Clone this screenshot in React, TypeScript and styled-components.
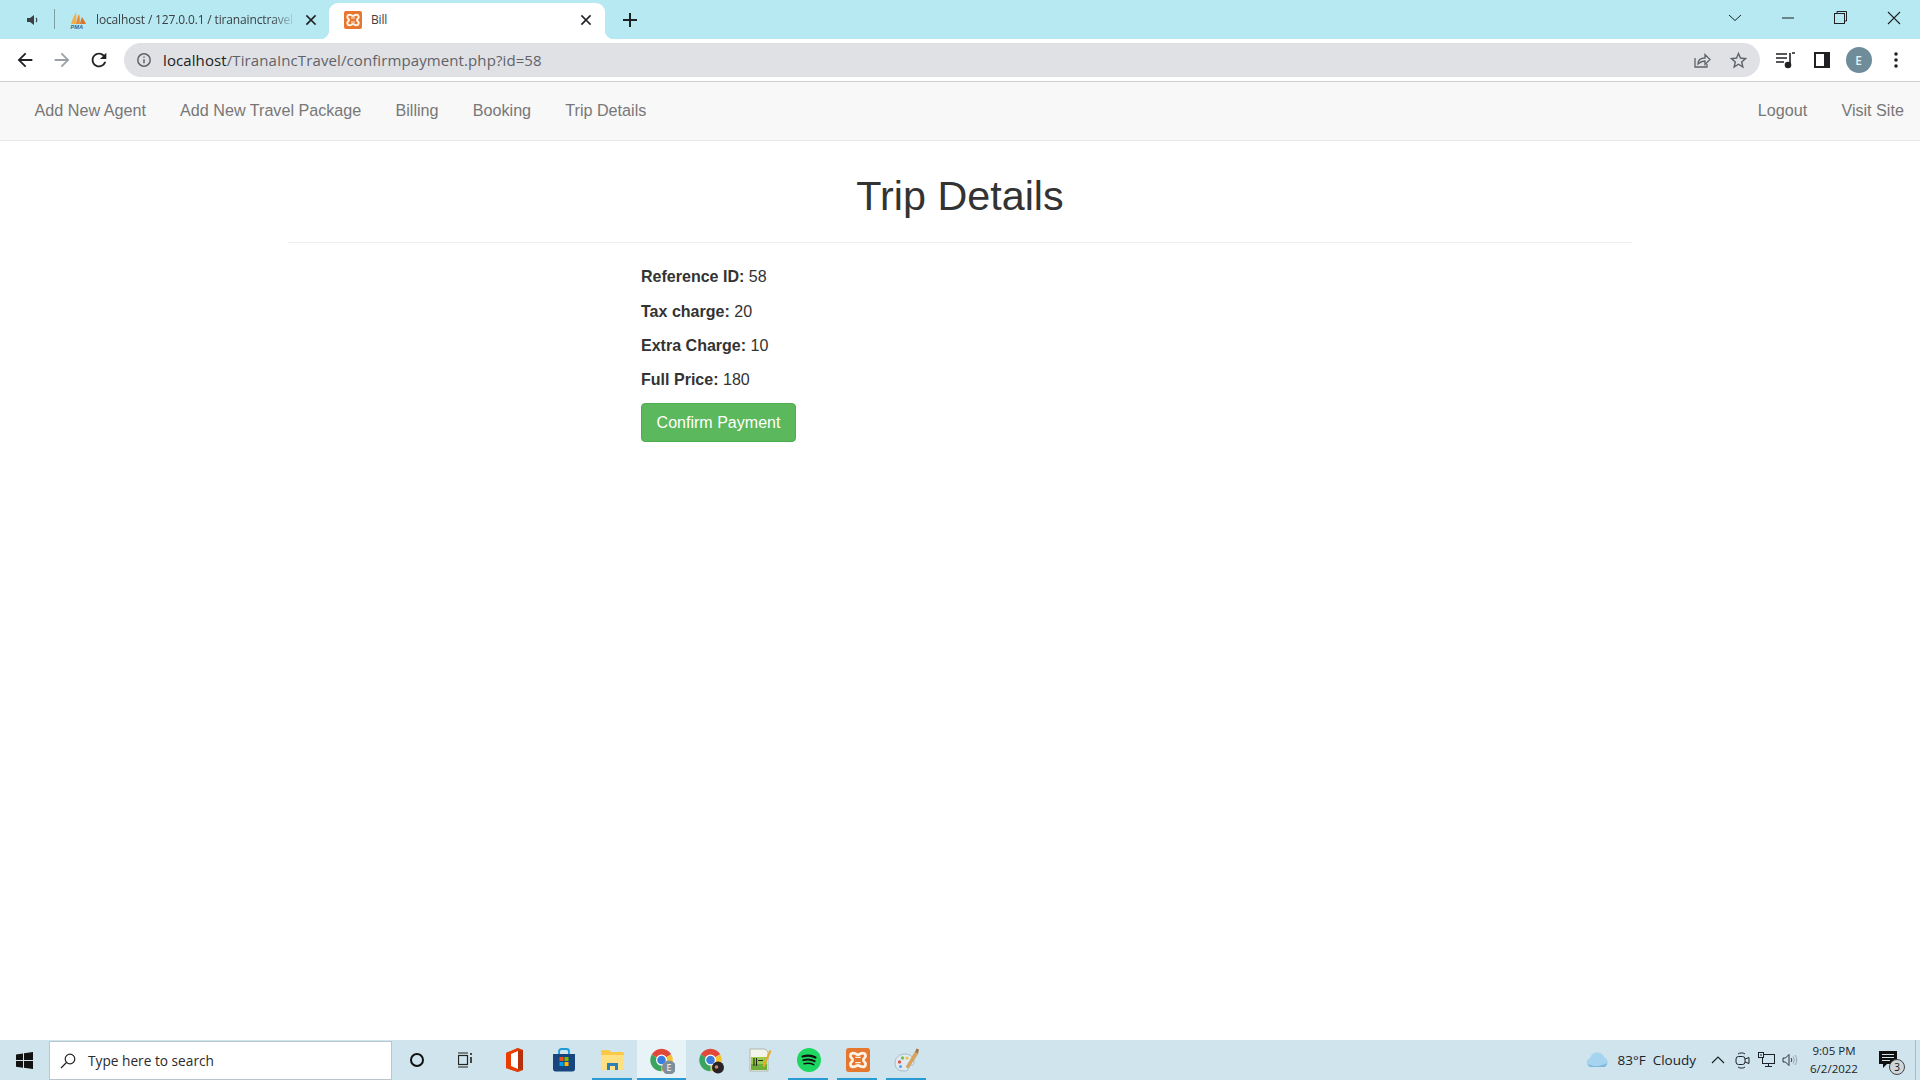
import React from "react";
import styled, { createGlobalStyle } from "styled-components";

const Global = createGlobalStyle`
  html, body { margin: 0; padding: 0; background: #fff; }
  * { box-sizing: border-box; }
  body { font-family: "Liberation Sans", Arial, sans-serif; color: #333; }
`;

const Page = styled.div`
  width: 1920px; height: 1080px; display: flex; flex-direction: column; overflow: hidden; background: #fff;
`;

/* ---------- tab strip ---------- */
const TabStrip = styled.div`
  height: 39px; flex: none; display: flex; align-items: flex-end; background: #b6e9f1;
  font-family: "Open Sans", sans-serif; font-size: 12px; color: #3c4043;
`;
const MuteSlot = styled.div`
  width: 55px; height: 39px; display: flex; align-items: center; justify-content: flex-end; padding-right: 15px;
  position: relative;
  &::after { content: ""; position: absolute; right: 0; top: 9px; width: 1px; height: 20px; background: #7f9ea3; }
`;
const Tab = styled.div<{ $active?: boolean }>`
  position: relative; height: ${p => (p.$active ? "36px" : "39px")}; flex: none;
  width: ${p => (p.$active ? "276px" : "274px")};
  display: flex; align-items: center; gap: 9px;
  padding: ${p => (p.$active ? "0 13px 3px 15px" : "0 12px 0 14px")};
  background: ${p => (p.$active ? "#fff" : "transparent")};
  border-radius: ${p => (p.$active ? "9px 9px 0 0" : "0")};
  ${p => p.$active && `
    &::before, &::after { content: ""; position: absolute; bottom: 0; width: 9px; height: 9px; }
    &::before { left: -9px; background: radial-gradient(circle at 0 0, transparent 9px, #fff 9.5px); }
    &::after { right: -9px; background: radial-gradient(circle at 100% 0, transparent 9px, #fff 9.5px); }
  `}
`;
const TabTitle = styled.span<{ $fade?: boolean }>`
  flex: 1; min-width: 0; white-space: nowrap; overflow: hidden; letter-spacing: -0.15px;
  ${p => p.$fade && `
    -webkit-mask-image: linear-gradient(to right, #000 88%, transparent 100%);
    mask-image: linear-gradient(to right, #000 88%, transparent 100%);
  `}
`;
const NewTab = styled.div`
  width: 24px; height: 39px; margin-left: 13px; display: flex; align-items: center; justify-content: center;
`;
const WindowControls = styled.div`
  margin-left: auto; display: flex; height: 39px; padding-bottom: 4px;
`;
const WinButton = styled.div`
  width: 53px; display: flex; align-items: center; justify-content: center;
`;

/* ---------- toolbar ---------- */
const Toolbar = styled.div`
  height: 43px; flex: none; display: flex; align-items: center; padding: 0 6px; background: #fff;
  border-bottom: 1px solid #cfcfcf;
`;
const ToolButton = styled.div`
  width: 37px; height: 34px; flex: none; display: flex; align-items: center; justify-content: center;
`;
const Omnibox = styled.div`
  flex: none; width: 1636px; height: 34px; margin: 0 6px 0 7px; border-radius: 17px; background: #dfe1e5;
  display: flex; align-items: center; padding: 0 3px 0 12px;
`;
const Url = styled.div`
  flex: 1; margin-left: 11px; font-family: "Open Sans", sans-serif; font-size: 15px; color: #5f6368; letter-spacing: 0.1px;
  b { font-weight: 400; color: #202124; }
`;
const Avatar = styled.div`
  width: 26px; height: 26px; border-radius: 50%; background: #6e8c99; color: #e9eff2;
  font: 600 12px "Open Sans", sans-serif; display: flex; align-items: center; justify-content: center;
`;

/* ---------- bootstrap page ---------- */
const NavBar = styled.nav`
  height: 59px; flex: none; display: flex; align-items: center; padding: 0 0 2px 17.5px; background: #f8f8f8;
  border-bottom: 1px solid #e7e7e7;
`;
const NavLink = styled.a`
  padding: 0 17.1px; font-size: 16.15px; color: #777; white-space: nowrap;
`;
const NavRight = styled.div`
  margin-left: auto; margin-right: -1px; display: flex;
`;
const Main = styled.main`
  flex: 1; min-height: 0; width: 1344px; margin: 0 auto; display: flex; flex-direction: column;
`;
const Title = styled.h1`
  margin: 0; height: 102px; padding-top: 32px; border-bottom: 1px solid #eee; text-align: center;
  font-size: 41.3px; font-weight: 400; line-height: 47px; color: #333;
`;
const Details = styled.div`
  padding: 16.4px 0 0 353px; display: flex; flex-direction: column; align-items: flex-start;
`;
const Line = styled.p`
  margin: 0; height: 34.3px; line-height: 34.3px; font-size: 16.05px; color: #333;
  b { font-weight: 700; }
`;
const ConfirmButton = styled.button`
  margin-top: 6.6px; width: 155px; height: 39px; padding: 0; background: #5cb85c; border: 1px solid #4cae4c;
  border-radius: 4px; color: #fff; font: 400 16.05px "Liberation Sans", Arial, sans-serif;
`;

/* ---------- taskbar ---------- */
const Taskbar = styled.footer`
  height: 40px; flex: none; display: flex; background: #cfe4ed; font-family: "Open Sans", sans-serif; color: #1b2328;
`;
const StartButton = styled.div`
  width: 49px; display: flex; align-items: center; justify-content: center;
`;
const SearchBox = styled.div`
  width: 343px; margin-top: 1px; background: #fff; border: 1px solid #b9c6cc; display: flex; align-items: center; gap: 12px; padding-left: 10px;
  font-size: 13.7px; color: #2b2b2b;
`;
const Slot = styled.div<{ $running?: boolean; $active?: boolean }>`
  position: relative; width: 49px; flex: none; display: flex; align-items: center; justify-content: center;
  background: ${p => (p.$active ? "#e8f3f8" : "transparent")};
  ${p => p.$running && `
    &::after { content: ""; position: absolute; bottom: 0; height: 2px; background: #2a9bd3;
      left: ${p.$active ? "0" : "4px"}; right: ${p.$active ? "0" : "5px"}; }
  `}
`;
const Tray = styled.div`
  margin-left: auto; display: flex; align-items: center; padding-right: 4px;
`;
const Weather = styled.div`
  display: flex; align-items: center; font-size: 13.5px; gap: 8px; margin-right: 12px;
`;
const TrayIcons = styled.div`
  display: flex; align-items: center; gap: 4px;
`;
const TrayIcon = styled.div`
  width: 20px; display: flex; justify-content: center;
`;
const Clock = styled.div`
  width: 66px; margin-left: 1px; text-align: center; font-size: 11.5px; line-height: 18px;
`;
const Notify = styled.div`
  position: relative; width: 34px; margin-left: 4px; display: flex; justify-content: center;
`;
const Badge = styled.span`
  position: absolute; right: 0; bottom: -6px; width: 16px; height: 16px; border-radius: 50%; background: #cfd6da;
  border: 1px solid #444; font-size: 10px; line-height: 14px; text-align: center; color: #111;
`;
const EdgeLine = styled.div`
  width: 1px; background: #a9bcc5; margin-left: 10px; height: 40px;
`;

/* ---------- drawings ---------- */
const Mat = ({ d, size = 20, fill = "#3c4043" }: { d: string; size?: number; fill?: string }) => (
  <svg width={size} height={size} viewBox="0 0 24 24" fill={fill}><path d={d} /></svg>
);
const BACK = "M20 11H7.83l5.59-5.59L12 4l-8 8 8 8 1.41-1.41L7.83 13H20v-2z";
const FWD = "M4 11h12.17l-5.59-5.59L12 4l8 8-8 8-1.41-1.41L16.17 13H4v-2z";
const RELOAD = "M17.65 6.35C16.2 4.9 14.21 4 12 4c-4.42 0-7.99 3.58-7.99 8s3.57 8 7.99 8c3.73 0 6.84-2.55 7.73-6h-2.08c-.82 2.33-3.04 4-5.65 4-3.31 0-6-2.69-6-6s2.69-6 6-6c1.66 0 3.14.69 4.22 1.78L13 11h7V4l-2.35 2.35z";
const STAR = "M22 9.24l-7.19-.62L12 2 9.19 8.63 2 9.24l5.46 4.73L5.82 21 12 17.27 18.18 21l-1.63-7.03L22 9.24zM12 15.4l-3.76 2.27 1-4.28-3.32-2.88 4.38-.38L12 6.1l1.71 4.04 4.38.38-3.32 2.88 1 4.28L12 15.4z";

const Close = ({ w = 1.7 }: { w?: number }) => (
  <svg width="12" height="12" viewBox="0 0 12 12" stroke="#202124" strokeWidth={w} strokeLinecap="square" style={{ flex: "none" }}><path d="M2 2l8 8M10 2l-8 8" /></svg>
);
const Mute = () => (
  <svg width="14" height="14" viewBox="0 0 14 14"><path d="M1 5h3l4-3v10L4 9H1z" fill="#3c4043" /><path d="M10 5c1 1 1 3 0 4" stroke="#3c4043" fill="none" strokeWidth="1.2" /></svg>
);
const PmaLogo = () => (
  <svg width="18" height="20" viewBox="0 0 18 20" style={{ flex: "none" }}>
    <path d="M2 14C3 10 5 6 7 2c.5 4 .5 8 0 12z" fill="#f2b04a" />
    <path d="M7 14c.5-3 1.500-7 3-10 1 3 .8 7 .8 10z" fill="#ec8a2e" />
    <path d="M11 14c.3-2 1-5 2-7 1.500 2 3 5 4 7z" fill="#d9762c" />
    <text x="1.500" y="19" fontSize="5.600" fontWeight="700" fontStyle="italic" fill="#3f5f92" fontFamily="Liberation Sans">PMA</text>
  </svg>
);
const Xampp = ({ size = 18 }: { size?: number }) => (
  <svg width={size} height={size} viewBox="0 0 18 18" style={{ flex: "none" }}>
    <rect width="18" height="18" rx="2" fill="#e5772f" />
    <path d="M5.500 3.800C7 3.800 8 5 9 5s2-1.200 3.500-1.200c2.300 0 2.900 2.600 1.300 3.800-1 .7-1 2.100 0 2.800 1.600 1.200 1 3.800-1.300 3.800C11 14.200 10 13 9 13s-2 1.200-3.500 1.200c-2.300 0-2.900-2.600-1.300-3.800 1-.7 1-2.100 0-2.800C2.600 6.400 3.200 3.800 5.500 3.800z" fill="none" stroke="#fdf2e6" strokeWidth="2" />
    <path d="M7 7h4M7 11h4" stroke="#fdf2e6" strokeWidth="1" />
  </svg>
);
const Info = () => (
  <svg width="16" height="16" viewBox="0 0 16 16" fill="none" stroke="#5f6368" strokeWidth="1.500">
    <circle cx="8" cy="8" r="6.200" /><path d="M8 7.200v4M8 4.500v1.300" />
  </svg>
);
const Share = () => (
  <svg width="20" height="20" viewBox="0 0 20 20" fill="none" stroke="#5f6368" strokeWidth="1.300">
    <path d="M3 8v9h12v-3" /><path d="M6 14c0-4 3-6 7-6V4.500l5 5-5 5V11c-3 0-5 1-7 3z" />
  </svg>
);
const MediaIcon = () => (
  <svg width="20" height="18" viewBox="0 0 20 18" fill="none" stroke="#202124" strokeWidth="1.600">
    <path d="M1 3h11M1 7h11M1 11h8" /><path d="M17 2h3M15 2v12" /><circle cx="13" cy="14" r="2.500" fill="#202124" />
  </svg>
);
const SidePanel = () => (
  <svg width="18" height="18" viewBox="0 0 18 18"><rect x="1" y="1" width="16" height="16" fill="#202124" /><rect x="3" y="3" width="8" height="12" fill="#fff" /></svg>
);
const Kebab = () => (
  <svg width="6" height="18" viewBox="0 0 6 18" fill="#202124"><circle cx="3" cy="3" r="1.800" /><circle cx="3" cy="9" r="1.800" /><circle cx="3" cy="15" r="1.800" /></svg>
);
const ChevronDown = () => (
  <svg width="14" height="8" viewBox="0 0 14 8" fill="none" stroke="#202124"><path d="M1 1l6 5.500L13 1" /></svg>
);
const Minimize = () => (
  <svg width="12" height="2" viewBox="0 0 12 2" stroke="#202124"><path d="M0 1h12" /></svg>
);
const Restore = () => (
  <svg width="13" height="13" viewBox="0 0 13 13" fill="none" stroke="#202124"><rect x=".5" y="2.500" width="10" height="10" /><path d="M3 2.500V.5h9.500V10h-2" /></svg>
);
const WinClose = () => (
  <svg width="14" height="14" viewBox="0 0 14 14" stroke="#202124" strokeWidth="1.100"><path d="M1 1l12 12M13 1L1 13" /></svg>
);
const WinLogo = () => (
  <svg width="17" height="17" viewBox="0 0 17 17" fill="#111"><path d="M0 2.400l7-1v6.700H0zM8 1.200l9-1.200v8H8zM0 9h7v6.700l-7-1zM8 9h9v8l-9-1.200z" /></svg>
);
const SearchGlass = () => (
  <svg width="16" height="16" viewBox="0 0 16 16" fill="none" stroke="#222" strokeWidth="1.200"><circle cx="10" cy="6" r="4.800" /><path d="M6.500 9.500L1 15" /></svg>
);
const Cortana = () => (
  <svg width="16" height="16" viewBox="0 0 16 16" fill="none" stroke="#111" strokeWidth="2"><circle cx="8" cy="8" r="6" /></svg>
);
const TaskView = () => (
  <svg width="16" height="16" viewBox="1 0 16 16" fill="none" stroke="#222" strokeWidth="1.200"><path d="M1 1h10M1 15h10" /><rect x="1.500" y="3.500" width="9" height="9" /><path d="M14 1v2M14 5v6" strokeWidth="1.600" /></svg>
);
const Office = () => (
  <svg width="20" height="24" viewBox="0 0 20 24">
    <path d="M1 5L13 0l5 2v20l-5 2-12-4z" fill="#d83b01" />
    <path d="M1 5l12-5v3L6 6v12l7 3v3L1 20z" fill="#eb3c00" />
    <path d="M6 6l7-3v18l-7-3z" fill="#fff" />
    <path d="M13 3l5-1v20l-5-1z" fill="#b7320c" />
  </svg>
);
const Store = () => (
  <svg width="24" height="24" viewBox="0 0 24 24">
    <path d="M7 6V3.500C7 2 8 1 9.500 1h5C16 1 17 2 17 3.500V6" fill="none" stroke="#1b9bd7" strokeWidth="1.800" />
    <path d="M1 6h22v15c0 1.500-1 2.500-2.500 2.500h-17C2 23.500 1 22.500 1 21z" fill="#17467e" />
    <rect x="7.500" y="9" width="4" height="4" fill="#f25022" /><rect x="12.500" y="9" width="4" height="4" fill="#7fba00" />
    <rect x="7.500" y="14" width="4" height="4" fill="#00a4ef" /><rect x="12.500" y="14" width="4" height="4" fill="#ffb900" />
  </svg>
);
const Folder = () => (
  <svg width="23" height="20" viewBox="0 0 23 20">
    <path d="M0 2c0-1 .5-2 2-2h6l2 2h11c1.500 0 2 1 2 2v14c0 1-.5 2-2 2H2c-1.500 0-2-1-2-2z" fill="#f9c947" />
    <path d="M0 5h23v13c0 1-.5 2-2 2H2c-1.500 0-2-1-2-2z" fill="#ffe183" />
    <path d="M6 20v-7h11v7h-3v-4H9v4z" fill="#2d7fb8" />
  </svg>
);
const Arc = ({ color, start }: { color: string; start: number }) => (
  <circle cx="12" cy="12" r="8" fill="none" stroke={color} strokeWidth="6.500" pathLength={3} strokeDasharray="1 2" transform={`rotate(${start} 12 12)`} />
);
const Chrome = ({ children }: { children?: React.ReactNode }) => (
  <svg width="27" height="27" viewBox="-1.500 -1 27 27">
    <Arc color="#e2483a" start={210} />
    <Arc color="#f6c230" start={330} />
    <Arc color="#3ba55d" start={90} />
    <circle cx="12" cy="12" r="5.500" fill="#fff" />
    <circle cx="12" cy="12" r="4.300" fill="#3b7ddd" />
    {children}
  </svg>
);
const Notepad = () => (
  <svg width="24" height="24" viewBox="0 0 24 24">
    <path d="M2 1h15l3 3v19H2z" fill="#f3f5ea" stroke="#9ba28f" strokeWidth=".7" />
    <path d="M3 9h16v13H3z" fill="#9acb4a" />
    <path d="M3 16h16v6H3z" fill="#6faf38" />
    <path d="M6 10v8M8.500 10v8M10 12.500h5" stroke="#1d2b18" strokeWidth="1.100" />
    <path d="M14.500 18L21.500 2l2 1-7 16z" fill="#e7ad2d" />
  </svg>
);
const Spotify = () => (
  <svg width="24" height="24" viewBox="0 0 24 24">
    <circle cx="12" cy="12" r="12" fill="#1ed760" />
    <g fill="none" stroke="#111" strokeLinecap="round">
      <path d="M5.500 8.500c4.500-1.300 9.500-1 13 1" strokeWidth="2.200" />
      <path d="M6.300 12.200c4-1.100 8-.8 11.300 1" strokeWidth="1.900" />
      <path d="M7 15.700c3.400-.8 6.800-.6 9.700.9" strokeWidth="1.500" />
    </g>
  </svg>
);
const Palette = () => (
  <svg width="26" height="24" viewBox="0 0 26 24">
    <path d="M1 15C1 9 6 6 11 6s9 3 9 8-3 2-5 4 1 5-5 5-9-3-9-8z" fill="#dfeaf2" stroke="#9cb0bc" strokeWidth=".8" />
    <circle cx="5.500" cy="14" r="1.700" fill="#e2574c" /><circle cx="8.500" cy="10" r="1.700" fill="#7bbf4a" />
    <circle cx="6.500" cy="18.500" r="1.500" fill="#5aa2dc" /><circle cx="13" cy="10" r="1.600" fill="#f1c040" />
    <path d="M12 19L21 4l3 1.500L14.500 20z" fill="#e0a35a" stroke="#b78333" strokeWidth=".4" />
    <path d="M21 4l1.500-3.500 2.500 1L24 5.500z" fill="#a3774a" />
  </svg>
);
const Cloud = () => (
  <svg width="23" height="16" viewBox="0 0 23 16">
    <path d="M5 15a4.500 4.500 0 0 1-1-8.800C5 2.500 8 .5 11.500.5c3.500 0 6 2 7 5A5 5 0 0 1 18 15z" fill="#a5d4ef" />
    <path d="M2 12c5 3 12 3 19-1-1 3-2 4-3 4H5c-1.500 0-2.500-1-3-3z" fill="#79b8de" />
  </svg>
);
const TrayChevron = () => (
  <svg width="14" height="8" viewBox="0 0 14 8" fill="none" stroke="#1b2328" strokeWidth="1.200"><path d="M1 7l6-6 6 6" /></svg>
);
const MeetIcon = () => (
  <svg width="15" height="17" viewBox="0 0 15 17" fill="none" stroke="#1b2328"><path d="M3 2c2-1.500 5-1.500 7 0M3 15c2 1.500 5 1.500 7 0" /><rect x="1" y="4.500" width="9" height="8" rx="2.500" /><path d="M10 7l4-1.500v6L10 10" /></svg>
);
const Network = () => (
  <svg width="17" height="16" viewBox="0 0 17 16" fill="none" stroke="#1b2328"><rect x="4.500" y="2.500" width="12" height="9" /><path d="M10.500 11.500v3M7 14.500h7" /><rect x=".5" y=".5" width="5" height="5" fill="#cfe4ed" /><path d="M2 3h2" /></svg>
);
const Volume = () => (
  <svg width="16" height="14" viewBox="0 0 16 14" fill="none" stroke="#1b2328" strokeWidth=".9"><path d="M1 5h2.500L7 1.500v11L3.500 9H1z" /><path d="M9 5c1 1 1 3 0 4" /><path d="M11 3.500c1.600 2 1.600 5 0 7M13 2c2.200 3 2.200 7 0 10" stroke="#8a9aa3" /></svg>
);
const NotifyIcon = () => (
  <svg width="18" height="18" viewBox="0 0 18 18"><path d="M0 0h18v13H8l-4 4v-4H0z" fill="#111" /><path d="M3 3.500h12M3 6.500h12M3 9.500h8" stroke="#cfe4ed" strokeWidth="1" /></svg>
);

const leftLinks = ["Add New Agent", "Add New Travel Package", "Billing", "Booking", "Trip Details"];
const rightLinks = ["Logout", "Visit Site"];
const lines: [string, string][] = [["Reference ID:", "58"], ["Tax charge:", "20"], ["Extra Charge:", "10"], ["Full Price:", "180"]];

export default function App() {
  return (
    <Page>
      <Global />
      <TabStrip>
        <MuteSlot><Mute /></MuteSlot>
        <Tab>
          <PmaLogo />
          <TabTitle $fade>localhost / 127.0.0.1 / tiranainctravel</TabTitle>
          <Close />
        </Tab>
        <Tab $active>
          <Xampp />
          <TabTitle>Bill</TabTitle>
          <Close />
        </Tab>
        <NewTab><Mat d="M19 13h-6v6h-2v-6H5v-2h6V5h2v6h6v2z" size={24} fill="#202124" /></NewTab>
        <WindowControls>
          <WinButton><ChevronDown /></WinButton>
          <WinButton><Minimize /></WinButton>
          <WinButton><Restore /></WinButton>
          <WinButton><WinClose /></WinButton>
        </WindowControls>
      </TabStrip>

      <Toolbar>
        <ToolButton><Mat d={BACK} size={22} fill="#202124" /></ToolButton>
        <ToolButton><Mat d={FWD} size={22} fill="#9aa0a6" /></ToolButton>
        <ToolButton><Mat d={RELOAD} size={22} fill="#202124" /></ToolButton>
        <Omnibox>
          <Info />
          <Url><b>localhost</b>/TiranaIncTravel/confirmpayment.php?id=58</Url>
          <ToolButton><Share /></ToolButton>
          <ToolButton><Mat d={STAR} size={21} fill="#5f6368" /></ToolButton>
        </Omnibox>
        <ToolButton><MediaIcon /></ToolButton>
        <ToolButton><SidePanel /></ToolButton>
        <ToolButton><Avatar>E</Avatar></ToolButton>
        <ToolButton><Kebab /></ToolButton>
      </Toolbar>

      <NavBar>
        {leftLinks.map(l => <NavLink key={l}>{l}</NavLink>)}
        <NavRight>
          {rightLinks.map(l => <NavLink key={l}>{l}</NavLink>)}
        </NavRight>
      </NavBar>

      <Main>
        <Title>Trip Details</Title>
        <Details>
          {lines.map(([k, v]) => <Line key={k}><b>{k}</b> {v}</Line>)}
          <ConfirmButton>Confirm Payment</ConfirmButton>
        </Details>
      </Main>

      <Taskbar>
        <StartButton><WinLogo /></StartButton>
        <SearchBox><SearchGlass />Type here to search</SearchBox>
        <Slot><Cortana /></Slot>
        <Slot><TaskView /></Slot>
        <Slot><Office /></Slot>
        <Slot><Store /></Slot>
        <Slot $running><Folder /></Slot>
        <Slot $running $active>
          <Chrome><circle cx="19.500" cy="19.500" r="7" fill="#7d8f9b" /><text x="19.500" y="23" fontSize="9" textAnchor="middle" fill="#fff" fontFamily="Open Sans">E</text></Chrome>
        </Slot>
        <Slot><Chrome><circle cx="19.500" cy="19.500" r="6" fill="#2a2326" /><circle cx="18" cy="19" r="1.800" fill="#c78f7c" /></Chrome></Slot>
        <Slot><Notepad /></Slot>
        <Slot $running><Spotify /></Slot>
        <Slot $running><Xampp size={24} /></Slot>
        <Slot $running><Palette /></Slot>
        <Tray>
          <Weather><Cloud /><span>83°F&nbsp;&nbsp;Cloudy</span></Weather>
          <TrayIcons>
            <TrayIcon><TrayChevron /></TrayIcon>
            <TrayIcon><MeetIcon /></TrayIcon>
            <TrayIcon><Network /></TrayIcon>
            <TrayIcon><Volume /></TrayIcon>
          </TrayIcons>
          <Clock>9:05 PM<br />6/2/2022</Clock>
          <Notify><NotifyIcon /><Badge>3</Badge></Notify>
          <EdgeLine />
        </Tray>
      </Taskbar>
    </Page>
  );
}
